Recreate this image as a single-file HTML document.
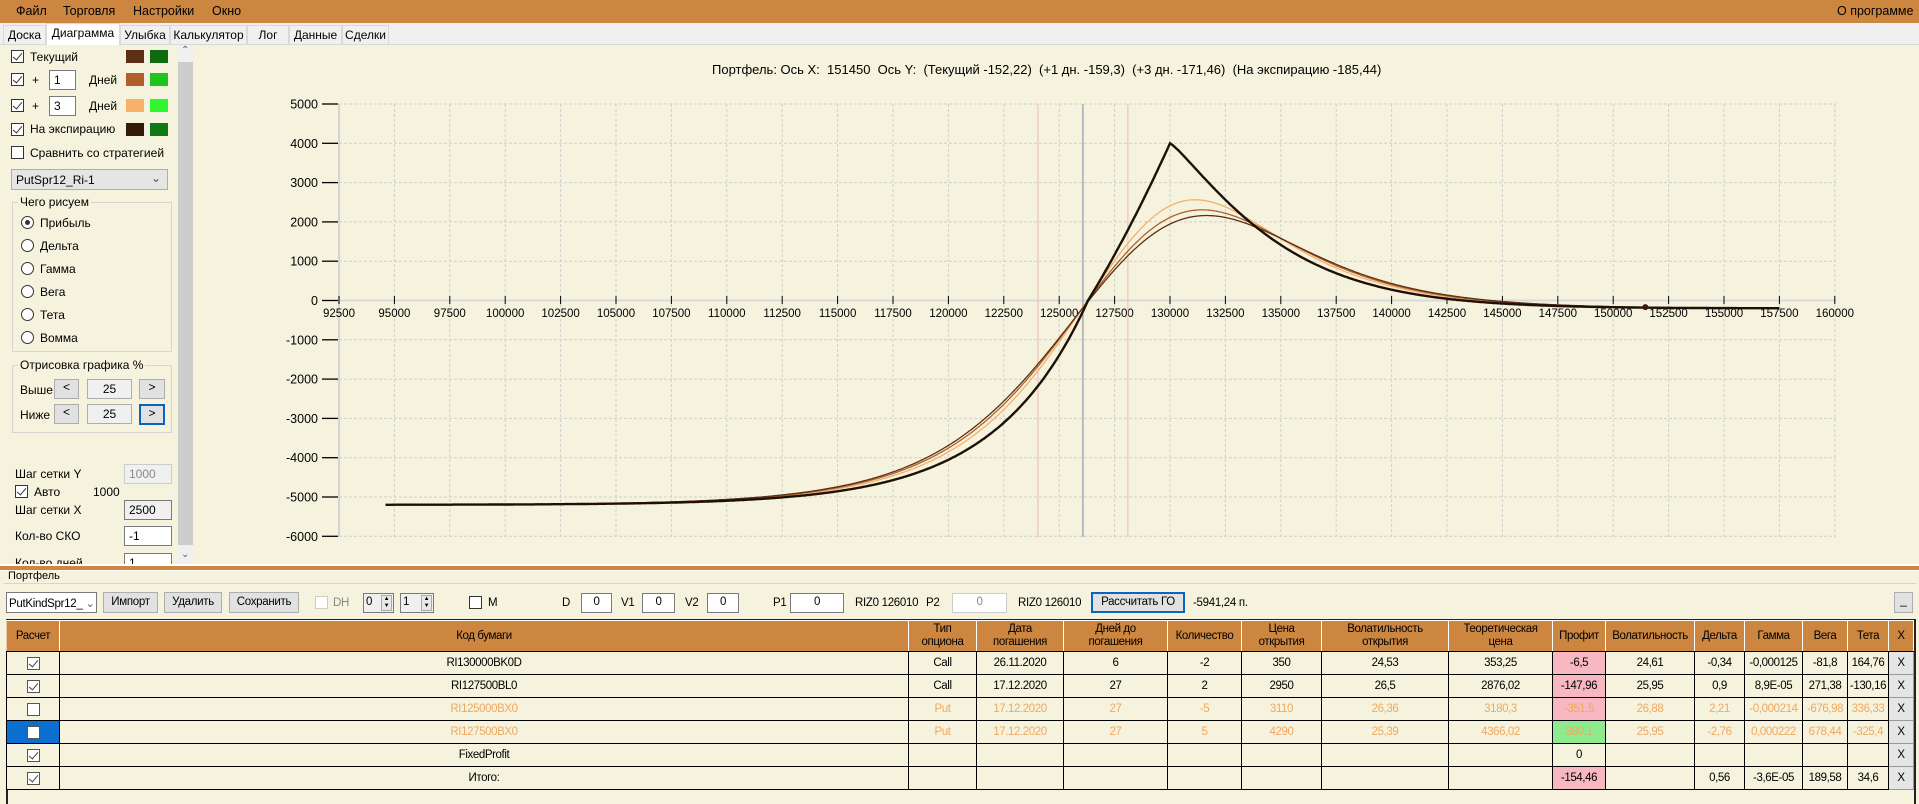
<!DOCTYPE html>
<html><head><meta charset="utf-8">
<style>
*{box-sizing:border-box;margin:0;padding:0}
body{width:1919px;height:804px;overflow:hidden;background:#f5f3dd;font-family:"Liberation Sans",sans-serif;font-size:12px;color:#000;position:relative}
.a{position:absolute;white-space:nowrap}
#menu{left:0;top:0;width:1919px;height:23px;background:#cd8640}
#menu span{position:absolute;top:4px;font-size:12.5px}
.tab{position:absolute;top:25px;height:19px;background:#f0f0f0;border:1px solid #d9d9d9;border-bottom:none;font-size:12px;padding-top:2px;text-align:center}
.cb{position:absolute;width:13px;height:13px;border:1px solid #333;background:#fff}
.cb.k::after{content:"";position:absolute;left:3px;top:0px;width:4px;height:8px;border:solid #333;border-width:0 1.3px 1.3px 0;transform:rotate(40deg)}
.sw{position:absolute;width:18px;height:13px}
.tb{position:absolute;height:20px;border:1px solid #7a7a7a;background:#fff;padding:2px 4px;font-size:12px}
.rd{position:absolute;width:13px;height:13px;border:1px solid #333;border-radius:50%;background:#fff}
.btn{position:absolute;background:#e1e1e1;border:1px solid #adadad;text-align:center;font-size:12px}
.gb{position:absolute;border:1px solid #d5d5d5}
.nar{font-size:11.5px;letter-spacing:-0.3px}
table{position:absolute;left:6px;top:620px;border-collapse:collapse;font-size:11.5px;letter-spacing:-0.4px;table-layout:fixed}
td,th{border:1px solid #000;text-align:center;padding:0;height:23px;overflow:hidden;white-space:nowrap}
th{background:#cd8640;font-weight:normal;height:31px;line-height:13px;border-color:#fff #fff #000 #fff;border-left:1px solid #e8c9a8}
td{background:#f5f3dd}
.o td{color:#f0a860}
.pk{background:#f7b8c2!important}
.gr{background:#8eea8e!important}
.x{background:#e5e5e5!important;border:1px solid #999}
.tc{display:inline-block;width:13px;height:13px;border:1px solid #555;background:#fff;vertical-align:middle;position:relative}
.tc.k::after{content:"";position:absolute;left:3px;top:0;width:4px;height:8px;border:solid #444;border-width:0 1.2px 1.2px 0;transform:rotate(40deg)}
.sp{position:absolute;right:1px;top:1px;width:11px;height:16px;background:#e8e8e8;border:1px solid #aaa;font-size:6px;line-height:7px;text-align:center}
</style></head><body>
<div id="menu" class="a"><span style="left:16px">Файл</span><span style="left:63px">Торговля</span><span style="left:133px">Настройки</span><span style="left:212px">Окно</span><span style="left:1837px">О программе</span></div>
<div class="a" style="left:0;top:23px;width:1919px;height:22px;background:#f0f0f0;border-bottom:1px solid #d9d9d9"></div>
<div class="tab" style="left:3px;width:43px">Доска</div>
<div class="tab" style="left:46px;width:74px;top:23px;height:22px;background:#fff">Диаграмма</div>
<div class="tab" style="left:120px;width:50px">Улыбка</div>
<div class="tab" style="left:170px;width:77px">Калькулятор</div>
<div class="tab" style="left:247px;width:42px">Лог</div>
<div class="tab" style="left:289px;width:53px">Данные</div>
<div class="tab" style="left:342px;width:47px">Сделки</div>

<div class="cb k" style="left:11px;top:50px"></div><div class="a" style="left:30px;top:50px">Текущий</div>
<div class="sw" style="left:126px;top:50px;background:#5c2f16"></div><div class="sw" style="left:150px;top:50px;background:#0e6b12"></div>
<div class="cb k" style="left:11px;top:73px"></div><div class="a" style="left:32px;top:73px">+</div><div class="tb" style="left:49px;top:70px;width:27px">1</div><div class="a" style="left:89px;top:73px">Дней</div>
<div class="sw" style="left:126px;top:73px;background:#b05f2b"></div><div class="sw" style="left:150px;top:73px;background:#1ec51e"></div>
<div class="cb k" style="left:11px;top:99px"></div><div class="a" style="left:32px;top:99px">+</div><div class="tb" style="left:49px;top:96px;width:27px">3</div><div class="a" style="left:89px;top:99px">Дней</div>
<div class="sw" style="left:126px;top:99px;background:#f8b068"></div><div class="sw" style="left:150px;top:99px;background:#2ef52e"></div>
<div class="cb k" style="left:11px;top:123px"></div><div class="a" style="left:30px;top:122px">На экспирацию</div>
<div class="sw" style="left:126px;top:123px;background:#331b08"></div><div class="sw" style="left:150px;top:123px;background:#0d7a12"></div>
<div class="cb" style="left:11px;top:146px"></div><div class="a" style="left:30px;top:146px">Сравнить со стратегией</div>
<div class="a" style="left:11px;top:169px;width:157px;height:21px;background:#e5e5e5;border:1px solid #adadad;padding:3px 4px">PutSpr12_Ri-1<span style="position:absolute;right:6px;top:1px;color:#555">⌄</span></div>
<div class="gb" style="left:12px;top:202px;width:160px;height:150px"></div>
<div class="a" style="left:18px;top:195px;background:#f5f3dd;padding:0 2px">Чего рисуем</div>
<div class="rd" style="left:21px;top:216px"><div style="position:absolute;left:3px;top:3px;width:5px;height:5px;border-radius:50%;background:#333"></div></div><div class="a" style="left:40px;top:216px">Прибыль</div>
<div class="rd" style="left:21px;top:239px"></div><div class="a" style="left:40px;top:239px">Дельта</div>
<div class="rd" style="left:21px;top:262px"></div><div class="a" style="left:40px;top:262px">Гамма</div>
<div class="rd" style="left:21px;top:285px"></div><div class="a" style="left:40px;top:285px">Вега</div>
<div class="rd" style="left:21px;top:308px"></div><div class="a" style="left:40px;top:308px">Тета</div>
<div class="rd" style="left:21px;top:331px"></div><div class="a" style="left:40px;top:331px">Вомма</div>
<div class="gb" style="left:12px;top:365px;width:160px;height:68px"></div>
<div class="a" style="left:18px;top:358px;background:#f5f3dd;padding:0 2px">Отрисовка графика %</div>
<div class="a" style="left:20px;top:383px">Выше</div>
<div class="btn" style="left:54px;top:379px;width:25px;height:20px">&lt;</div><div class="btn" style="left:87px;top:379px;width:45px;height:20px;background:#f0f0f0;padding-top:2px">25</div><div class="btn" style="left:139px;top:379px;width:26px;height:20px">&gt;</div>
<div class="a" style="left:20px;top:408px">Ниже</div>
<div class="btn" style="left:54px;top:404px;width:25px;height:20px">&lt;</div><div class="btn" style="left:87px;top:404px;width:45px;height:20px;background:#f0f0f0;padding-top:2px">25</div><div class="btn" style="left:139px;top:404px;width:26px;height:21px;border:2px solid #0a64c0">&gt;</div>
<div class="a" style="left:15px;top:467px">Шаг сетки Y</div><div class="tb" style="left:124px;top:464px;width:48px;background:#f0f0f0;border-color:#ccc;color:#888">1000</div>
<div class="cb k" style="left:15px;top:485px"></div><div class="a" style="left:34px;top:485px">Авто</div><div class="a" style="left:93px;top:485px">1000</div>
<div class="a" style="left:15px;top:503px">Шаг сетки X</div><div class="tb" style="left:124px;top:500px;width:48px;background:#f0f0f0">2500</div>
<div class="a" style="left:15px;top:529px">Кол-во СКО</div><div class="tb" style="left:124px;top:526px;width:48px">-1</div>
<div class="a" style="left:15px;top:556px;height:8px;overflow:hidden">Кол-во дней</div><div class="tb" style="left:124px;top:553px;width:48px;height:11px;border-bottom:none">1</div>
<div class="a" style="left:178px;top:45px;width:15px;height:520px;background:#f0f0f0"></div>
<div class="a" style="left:178px;top:62px;width:15px;height:483px;background:#cdcdcd"></div>
<div class="a" style="left:181px;top:45px;font-size:10px;color:#606060">⌃</div>
<div class="a" style="left:181px;top:549px;font-size:10px;color:#606060">⌄</div>

<div class="a" style="left:712px;top:62px;font-size:13px">Портфель: Ось X:&nbsp; 151450 &nbsp;Ось Y:&nbsp; (Текущий -152,22) &nbsp;(+1 дн. -159,3) &nbsp;(+3 дн. -171,46) &nbsp;(На экспирацию -185,44)</div>
<svg id="ch" class="a" style="left:0;top:0" width="1919" height="566"></svg>

<div class="a" style="left:0;top:564px;width:1919px;height:2px;background:#fff"></div>
<div class="a" style="left:0;top:566px;width:1919px;height:4px;background:#cd8640"></div>
<div class="a" style="left:0;top:570px;width:1919px;height:1px;background:#fff"></div>

<div class="a" style="left:4px;top:583px;width:1912px;height:1px;background:#d5d5d5"></div>
<div class="a" style="left:8px;top:570px;background:#f5f3dd;font-size:11px">Портфель</div>
<div class="a nar" style="left:6px;top:592px;width:91px;height:21px;background:#fff;border:1px solid #7a7a7a;padding:3px 2px;overflow:hidden">PutKindSpr12_ <span style="color:#666">⌄</span></div>
<div class="btn nar" style="left:103px;top:592px;width:55px;height:21px;padding-top:3px">Импорт</div>
<div class="btn nar" style="left:164px;top:592px;width:58px;height:21px;padding-top:3px">Удалить</div>
<div class="btn nar" style="left:229px;top:592px;width:70px;height:21px;padding-top:3px">Сохранить</div>
<div class="cb" style="left:315px;top:596px;border-color:#ccc"></div><div class="a nar" style="left:333px;top:597px;color:#888">DH</div>
<div class="tb nar" style="left:363px;top:593px;width:31px;padding:2px 2px;background:#f0f0f0">0<div class="sp">▲<br>▼</div></div><div class="tb nar" style="left:400px;top:593px;width:34px;padding:2px 2px;background:#f0f0f0">1<div class="sp">▲<br>▼</div></div>
<div class="cb" style="left:469px;top:596px"></div><div class="a nar" style="left:488px;top:597px">M</div>
<div class="a nar" style="left:562px;top:597px">D</div><div class="tb nar" style="left:581px;top:593px;width:31px;text-align:center">0</div>
<div class="a nar" style="left:621px;top:597px">V1</div><div class="tb nar" style="left:642px;top:593px;width:33px;text-align:center">0</div>
<div class="a nar" style="left:685px;top:597px">V2</div><div class="tb nar" style="left:707px;top:593px;width:32px;text-align:center">0</div>
<div class="a nar" style="left:773px;top:597px">P1</div><div class="tb nar" style="left:790px;top:593px;width:54px;text-align:center">0</div>
<div class="a nar" style="left:855px;top:597px">RIZ0 126010</div>
<div class="a nar" style="left:926px;top:597px">P2</div><div class="tb nar" style="left:952px;top:593px;width:55px;text-align:center;border-color:#ccc;color:#888">0</div>
<div class="a nar" style="left:1018px;top:597px">RIZ0 126010</div>
<div class="btn nar" style="left:1091px;top:592px;width:94px;height:21px;border:2px solid #0a64c0;padding-top:2px">Рассчитать ГО</div>
<div class="a nar" style="left:1193px;top:597px">-5941,24 п.</div>
<div class="btn" style="left:1894px;top:592px;width:19px;height:21px">_</div>
<div class="a" style="left:6px;top:619px;width:1910px;height:185px;border:2px solid #222;border-bottom:none"></div>

<table style="width:1907px">
<colgroup><col style="width:53px"><col style="width:849px"><col style="width:68px"><col style="width:87px"><col style="width:104px"><col style="width:74px"><col style="width:80px"><col style="width:127px"><col style="width:104px"><col style="width:53px"><col style="width:89px"><col style="width:50px"><col style="width:58px"><col style="width:45px"><col style="width:41px"><col style="width:25px"></colgroup>
<tr><th>Расчет</th><th>Код бумаги</th><th>Тип<br>опциона</th><th>Дата<br>погашения</th><th>Дней до<br>погашения</th><th>Количество</th><th>Цена<br>открытия</th><th>Волатильность<br>открытия</th><th>Теоретическая<br>цена</th><th>Профит</th><th>Волатильность</th><th>Дельта</th><th>Гамма</th><th>Вега</th><th>Тета</th><th>Х</th></tr>
<tr><td><span class="tc k"></span></td><td>RI130000BK0D</td><td>Call</td><td>26.11.2020</td><td>6</td><td>-2</td><td>350</td><td>24,53</td><td>353,25</td><td class="pk">-6,5</td><td>24,61</td><td>-0,34</td><td>-0,000125</td><td>-81,8</td><td>164,76</td><td class="x">X</td></tr>
<tr><td><span class="tc k"></span></td><td>RI127500BL0</td><td>Call</td><td>17.12.2020</td><td>27</td><td>2</td><td>2950</td><td>26,5</td><td>2876,02</td><td class="pk">-147,96</td><td>25,95</td><td>0,9</td><td>8,9E-05</td><td>271,38</td><td>-130,16</td><td class="x">X</td></tr>
<tr class="o"><td><span class="tc"></span></td><td>RI125000BX0</td><td>Put</td><td>17.12.2020</td><td>27</td><td>-5</td><td>3110</td><td>26,36</td><td>3180,3</td><td class="pk">-351,5</td><td>26,88</td><td>2,21</td><td>-0,000214</td><td>-676,98</td><td>336,33</td><td class="x" style="color:#000">X</td></tr>
<tr class="o"><td style="background:#0a6fd0"><span class="tc"></span></td><td>RI127500BX0</td><td>Put</td><td>17.12.2020</td><td>27</td><td>5</td><td>4290</td><td>25,39</td><td>4366,02</td><td class="gr">380,1</td><td>25,95</td><td>-2,76</td><td>0,000222</td><td>678,44</td><td>-325,4</td><td class="x" style="color:#000">X</td></tr>
<tr><td><span class="tc k"></span></td><td>FixedProfit</td><td></td><td></td><td></td><td></td><td></td><td></td><td></td><td>0</td><td></td><td></td><td></td><td></td><td></td><td class="x">X</td></tr>
<tr><td><span class="tc k"></span></td><td>Итого:</td><td></td><td></td><td></td><td></td><td></td><td></td><td></td><td class="pk">-154,46</td><td></td><td>0,56</td><td>-3,6E-05</td><td>189,58</td><td>34,6</td><td class="x">X</td></tr>
</table>

<script>
(function(){
var s=document.getElementById('ch'),h='';
function X(v){return 339+(v-92500)*0.02216}
function Y(p){return 300.5-p*0.0393}
for(var v=92500;v<=160000;v+=2500){var x=X(v).toFixed(1);h+='<line x1="'+x+'" y1="104" x2="'+x+'" y2="537" stroke="#cfcfcf" stroke-dasharray="3,2"/>';}
for(var p=5000;p>=-6000;p-=1000){var y=Y(p).toFixed(1);h+='<line x1="339" y1="'+y+'" x2="1836" y2="'+y+'" stroke="#cfcfcf" stroke-dasharray="3,2"/>';
h+='<line x1="322" y1="'+y+'" x2="338" y2="'+y+'" stroke="#000" stroke-width="1.3"/>';
h+='<text x="318" y="'+(+y+4.5)+'" text-anchor="end" font-size="12.5" font-family="Liberation Sans">'+p+'</text>';}
h+='<line x1="339" y1="104" x2="339" y2="537" stroke="#d4d4d4" stroke-width="2"/>';
h+='<line x1="339" y1="300.5" x2="1836" y2="300.5" stroke="#d8d8d8" stroke-width="2"/>';
for(var v=92500;v<=160000;v+=2500){var x=X(v).toFixed(1);h+='<line x1="'+x+'" y1="296" x2="'+x+'" y2="304" stroke="#000"/>';
h+='<text x="'+x+'" y="317" text-anchor="middle" font-size="11.5" font-family="Liberation Sans">'+v+'</text>';}
h+='<line x1="'+X(124040)+'" y1="104" x2="'+X(124040)+'" y2="537" stroke="#f0b8b8"/>';
h+='<line x1="'+X(128100)+'" y1="104" x2="'+X(128100)+'" y2="537" stroke="#f0b8b8"/>';
h+='<line x1="'+X(126070)+'" y1="104" x2="'+X(126070)+'" y2="537" stroke="#9aa0b0" stroke-width="1.3"/>';
function E(v){
 if(v<=126300)return -5200+5200*Math.exp((v-126300)/4170);
 if(v<=130000){var t=(v-126300)/3700;return 4000*(0.85*t+0.15*t*t);}
 var d=v-130000;return -200+4200*Math.exp(-Math.pow(d/5195,1.19));}
var a=94600,b=157500,st=50,xs=[],es=[];
for(var v=a-25000;v<=b+25000;v+=st){xs.push(v);es.push(E(Math.min(Math.max(v,a),b)));}
function sm(sig){var r=Math.ceil(3*sig/st),w=[],ws=0;for(var k=-r;k<=r;k++){var q=Math.exp(-0.5*Math.pow(k*st/sig,2));w.push(q);ws+=q;}
 var d='';for(var i=0;i<xs.length;i++){var v=xs[i];if(v<a||v>b)continue;var sum=0;for(var k=-r;k<=r;k++){var j=Math.min(Math.max(i+k,0),xs.length-1);sum+=w[k+r]*es[j];}
 d+=(d?'L':'M')+X(v).toFixed(1)+','+Y(sum/ws).toFixed(1);}return d;}
function raw(){var d='';for(var v=a;v<=b;v+=st){d+=(d?'L':'M')+X(v).toFixed(1)+','+Y(E(v)).toFixed(1);}return d;}
h+='<path d="'+sm(2400)+'" fill="none" stroke="#f5b06a" stroke-width="1.3"/>';
h+='<path d="'+sm(2900)+'" fill="none" stroke="#b0602c" stroke-width="1.3"/>';
h+='<path d="'+sm(3200)+'" fill="none" stroke="#5c2f16" stroke-width="1.3"/>';
h+='<path d="'+raw()+'" fill="none" stroke="#1e1006" stroke-width="2.4"/>';
h+='<circle cx="'+X(151450)+'" cy="'+Y(-170)+'" r="3" fill="#3a1a08"/>';
s.innerHTML=h;
})();
</script>
</body></html>
